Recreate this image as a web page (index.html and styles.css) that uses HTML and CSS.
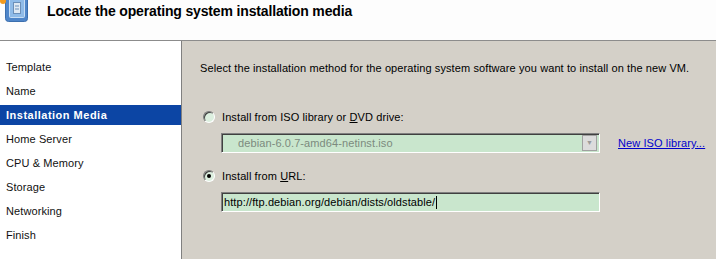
FILE: index.html
```html
<!DOCTYPE html>
<html lang="en">

<head>
    <meta charset="UTF-8">
    <title>New VM - Installation Media</title>
    <link rel="stylesheet" href="styles.css">
</head>

<body>
    <div class="wizard">
        <div class="header">
            <svg class="logo" width="30" height="28" viewBox="0 0 30 28">
                <rect x="5.5" y="-6.5" width="22" height="28" rx="3" fill="#4f86c9" stroke="#3c6fae"/>
                <rect x="9.5" y="-3.5" width="15" height="21" rx="1" fill="#8fbbe8" stroke="#c8def4"/>
                <rect x="13.5" y="2.5" width="7" height="11" fill="#dfe9f3" stroke="#6b8fb8"/>
                <line x1="15" y1="6" x2="19" y2="6" stroke="#6b8fb8"/>
                <line x1="15" y1="9" x2="19" y2="9" stroke="#6b8fb8"/>
                <circle cx="3" cy="1" r="3" fill="#f29a1d"/>
            </svg>
            <h1 class="title">Locate the operating system installation media</h1>
        </div>

        <div class="main">
            <div class="nav">
                <div class="nav-item">Template</div>
                <div class="nav-item">Name</div>
                <div class="nav-item active">Installation Media</div>
                <div class="nav-item">Home Server</div>
                <div class="nav-item">CPU &amp; Memory</div>
                <div class="nav-item">Storage</div>
                <div class="nav-item">Networking</div>
                <div class="nav-item">Finish</div>
            </div>

            <div class="content">
                <p class="intro">Select the installation method for the operating system software you want to install on the new VM.</p>

                <div class="option">
                    <span class="radio"></span>
                    <span>Install from ISO library or <u>D</u>VD drive:</span>
                </div>
                <div class="field-row">
                    <div class="combo">
                        <span class="combo-text">debian-6.0.7-amd64-netinst.iso</span>
                        <span class="combo-btn">&#9660;</span>
                    </div>
                    <a class="link" href="#">New ISO library...</a>
                </div>

                <div class="option second">
                    <span class="radio checked"></span>
                    <span>Install from <u>U</u>RL:</span>
                </div>
                <div class="field-row">
                    <div class="textbox">http://ftp.debian.org/debian/dists/oldstable/<span class="caret"></span></div>
                </div>
            </div>
        </div>
    </div>
</body>

</html>
```

FILE: styles.css
```css
body {
    margin: 0;
    font-family: "Liberation Sans", Arial, sans-serif;
    font-size: 11px;
    letter-spacing: 0.1px;
    color: #000;
}

.wizard {
    width: 716px;
    height: 259px;
    overflow: hidden;
}

.header {
    height: 40px;
    background-color: #fdfdfd;
    border-bottom: 1px solid #8c8c8c;
    display: flex;
    align-items: flex-start;
}

.logo {
    flex: none;
    margin-right: 17px;
}

.title {
    margin: 0;
    padding-top: 1px;
    font-size: 14px;
    font-weight: bold;
    letter-spacing: -0.15px;
    line-height: 20px;
}

.main {
    display: flex;
    height: 218px;
}

.nav {
    flex: none;
    width: 181px;
    background-color: #fff;
    border-right: 1px solid #808080;
    padding-top: 14px;
}

.nav-item {
    height: 24px;
    line-height: 25px;
    padding-left: 6px;
    color: #111;
}

.nav-item.active {
    height: 20px;
    line-height: 21px;
    margin: 2px 0;
    background-color: #0c45a4;
    color: #fff;
    font-weight: bold;
    letter-spacing: 0.5px;
}

.content {
    flex: 1;
    background-color: #d4d0c8;
    padding: 0 0 0 18px;
}

.intro {
    margin: 19px 0 0 0;
    line-height: 16px;
}

.option {
    display: flex;
    align-items: center;
    gap: 7px;
    margin: 33px 0 0 3px;
    height: 16px;
}

.option.second {
    margin-top: 15px;
}

.radio {
    width: 10px;
    height: 10px;
    border-radius: 50%;
    border: 1px solid;
    border-color: #7a7a7a #ffffff #ffffff #7a7a7a;
    background-color: #dcefdf;
    box-shadow: inset 1px 1px 0 #404040;
    display: flex;
    align-items: center;
    justify-content: center;
}

.radio.checked::after {
    content: "";
    width: 4px;
    height: 4px;
    border-radius: 50%;
    background-color: #000;
}

.field-row {
    display: flex;
    align-items: center;
    margin: 8px 0 0 21px;
}

.combo,
.textbox {
    box-sizing: border-box;
    width: 379px;
    height: 20px;
    border: 1px solid;
    border-color: #808080 #fff #fff #808080;
    box-shadow: inset 1px 1px 0 #404040;
    background-color: #c9e6cd;
    display: flex;
    align-items: center;
}

.combo-text {
    flex: 1;
    padding-left: 16px;
    color: #7c8a7e;
}

.combo-btn {
    width: 13px;
    height: 14px;
    margin-right: 2px;
    background-color: #dcdcdc;
    border: 1px solid #a0a0a0;
    color: #9a9a9a;
    font-size: 7px;
    line-height: 14px;
    text-align: center;
}

.link {
    margin-left: 18px;
    color: #0000cc;
}

.textbox {
    padding-left: 2px;
}

.caret {
    display: inline-block;
    width: 1px;
    height: 13px;
    background-color: #000;
    margin-left: 1px;
}
```
